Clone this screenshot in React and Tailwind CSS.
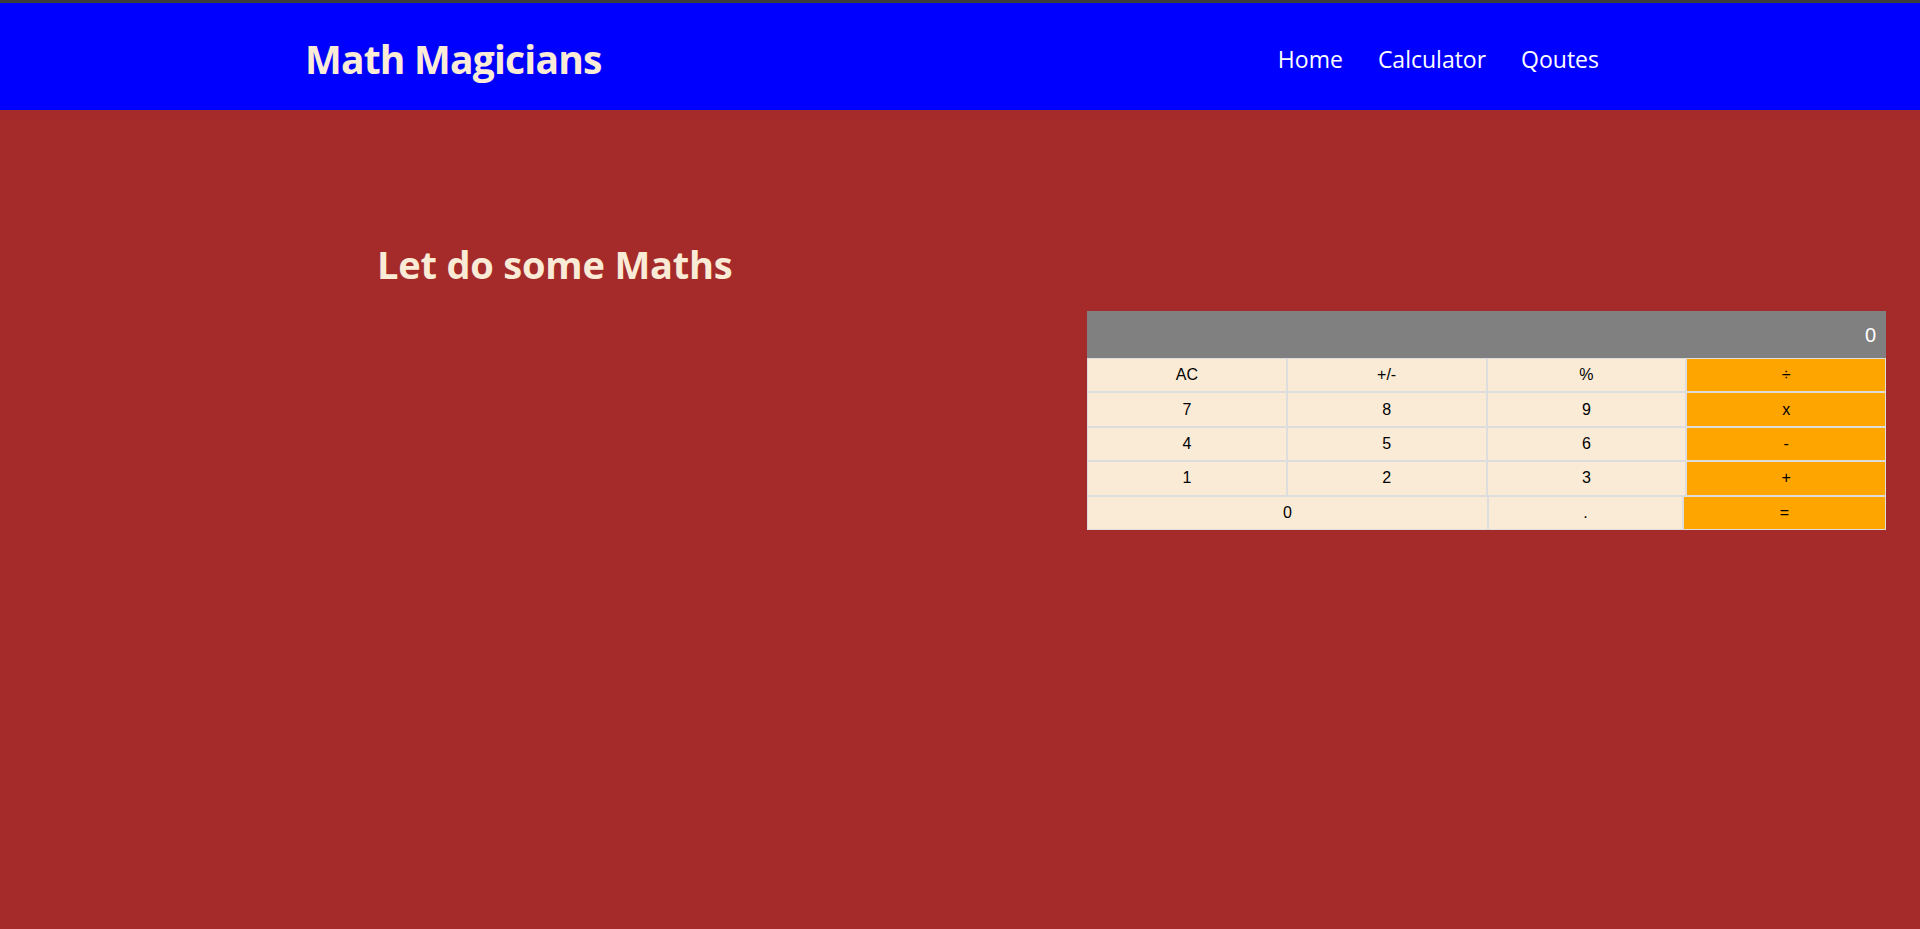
const keys = [
  ["AC", false],
  ["+/-", false],
  ["%", false],
  ["÷", true],
  ["7", false],
  ["8", false],
  ["9", false],
  ["x", true],
  ["4", false],
  ["5", false],
  ["6", false],
  ["-", true],
  ["1", false],
  ["2", false],
  ["3", false],
  ["+", true],
];

const Key = ({ label, op, className = "" }) => (
  <button
    type="button"
    className={`h-[34.4px] border border-[#dddddd] text-base text-black flex items-center justify-center ${
      op ? "bg-[#ffa500]" : "bg-[#faebd7]"
    } ${className}`}
  >
    {label}
  </button>
);

const Calculator = () => (
  <div className="w-[799px] font-['Liberation_Sans',Arial,sans-serif]">
    <div className="h-[47px] bg-[#808080] text-white text-[20px] flex items-center justify-end pr-[10px]">
      0
    </div>
    <div className="grid grid-cols-4">
      {keys.map(([label, op]) => (
        <Key key={label} label={label} op={op} />
      ))}
    </div>
    <div className="flex">
      <Key label="0" className="w-[401px]" />
      <Key label="." className="w-[195px]" />
      <Key label="=" op className="flex-1" />
    </div>
  </div>
);

export default function App() {
  return (
    <div className="min-h-[929px] bg-[#a52a2a] font-['Open_Sans',sans-serif]">
      <header className="h-[110px] border-t-[3px] border-[#3c3c3c] bg-[#0000ff] flex items-center justify-between pt-[5px] pl-[305px] pr-[321px]">
        <h1 className="text-[39px] font-bold text-[#faebd7] tracking-[-0.8px]">
          Math Magicians
        </h1>
        <nav className="flex gap-[35px] text-[23px] text-white">
          <a href="#">Home</a>
          <a href="#">Calculator</a>
          <a href="#">Qoutes</a>
        </nav>
      </header>
      <main className="flex">
        <div className="w-[1087px] pl-[377px] pt-[130px]">
          <h2 className="text-[38px] leading-[48px] font-bold text-[#faebd7] tracking-[-0.2px]">
            Let do some Maths
          </h2>
        </div>
        <div className="pt-[201px]">
          <Calculator />
        </div>
      </main>
    </div>
  );
}
